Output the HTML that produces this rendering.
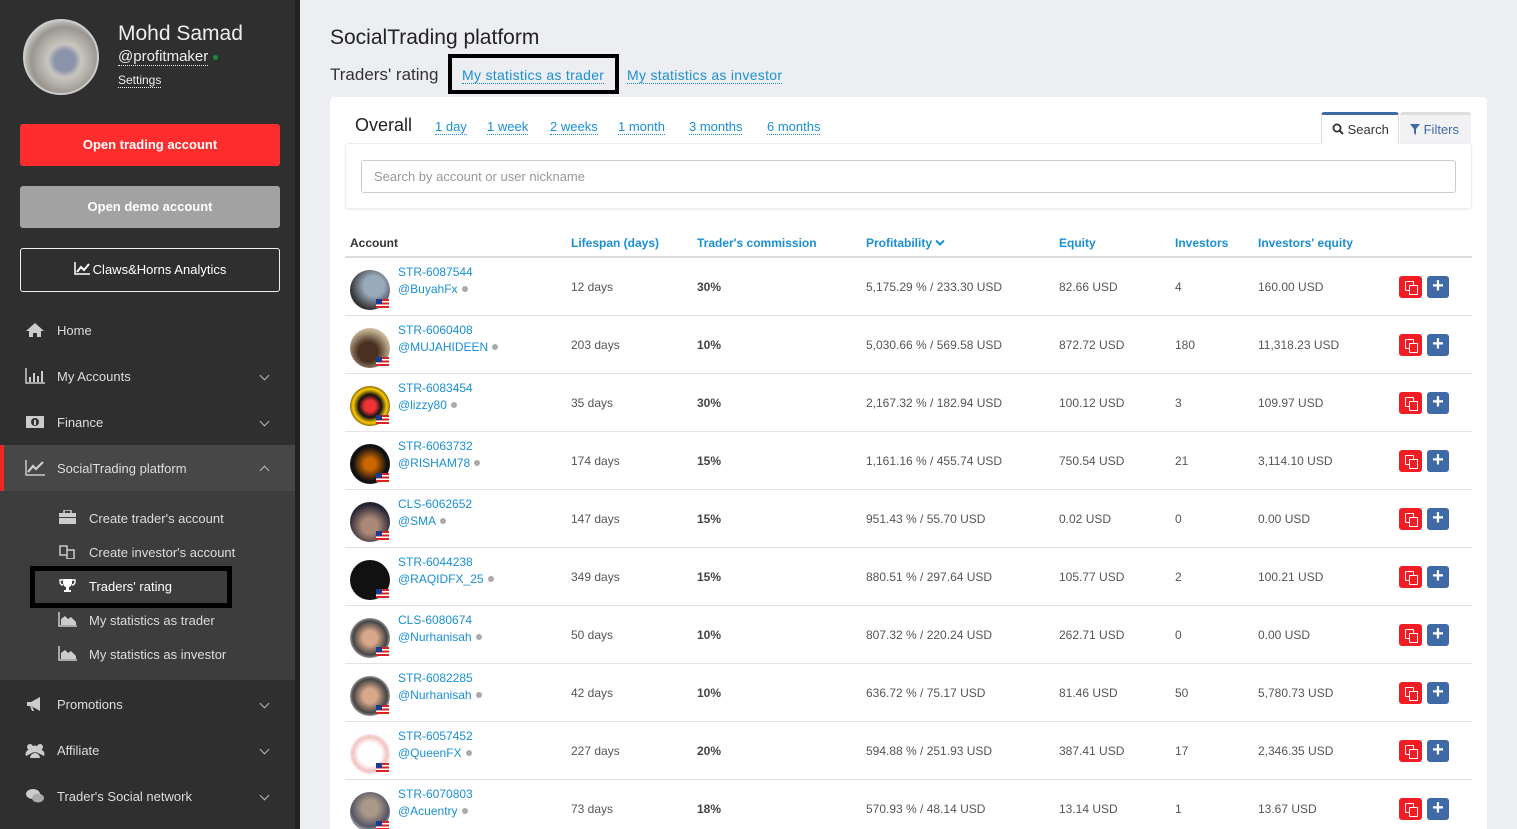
<!DOCTYPE html>
<html><head><meta charset="utf-8">
<style>
*{box-sizing:border-box;margin:0;padding:0}
html,body{width:1517px;height:829px;overflow:hidden}
body{background:#eceef2;font-family:"Liberation Sans",sans-serif;position:relative}
.a{position:absolute;white-space:nowrap}
#sb{position:absolute;left:0;top:0;width:300px;height:829px;background:#2f2f2f}
#sb .strip{position:absolute;left:295px;top:0;width:5px;height:829px;background:#222}
.btn{position:absolute;left:20px;width:260px;border-radius:3px;color:#fff;font-weight:bold;font-size:13px;text-align:center}
.mi{position:absolute;left:57px;color:#ddd;font-size:13px}
.ic{position:absolute;left:25px;width:20px;height:16px}
.chev{position:absolute;left:261px;width:7px;height:7px;border-right:1.5px solid #bbb;border-bottom:1.5px solid #bbb;transform:rotate(45deg)}
.si{position:absolute;left:89px;color:#ddd;font-size:13px}
.sic{position:absolute;left:58px;width:19px;height:15px}
.lnk{color:#1a8fd2;border-bottom:1px dotted #1a8fd2}
.hd{position:absolute;top:236px;font-size:12px;font-weight:bold;color:#1a8fd2}
.row{position:absolute;left:345px;width:1127px;height:58px;border-bottom:1px solid #e4e4e4}
.row .c{position:absolute;top:22px;font-size:12px;color:#555}
.row .cm{font-weight:bold;color:#444!important}
.av{position:absolute;left:5px;top:12px;width:40px;height:40px;border-radius:50%}
.flag{position:absolute;left:31px;top:41px;width:13px;height:9px;background:linear-gradient(#d22 0 20%,#fff 20% 40%,#d22 40% 60%,#fff 60% 80%,#d22 80%)}
.flag:before{content:"";position:absolute;left:0;top:0;width:6px;height:5px;background:#1a3c8f}
.id{position:absolute;left:53px;top:7px;font-size:12px;color:#1a8fd2}
.nk{position:absolute;left:53px;top:24px;font-size:12px;color:#1a8fd2}
.nk i{display:inline-block;width:6px;height:6px;border-radius:50%;background:#aaa;margin-left:4px;vertical-align:1px}
.b1{position:absolute;left:1054px;top:18px;width:23px;height:22px;background:#f01d24;border-radius:3px}
.b1:before{content:"";position:absolute;left:6px;top:5px;width:7px;height:8px;border:1.5px solid #fff;border-radius:1px}
.b1:after{content:"";position:absolute;left:10px;top:9px;width:7px;height:8px;border:1.5px solid #fff;border-radius:1px;background:#f01d24}
.b2{position:absolute;left:1082px;top:18px;width:22px;height:22px;background:#3f6aa6;border-radius:3px;color:#fff;font-size:20px;font-weight:bold;text-align:center;line-height:21px}
</style></head><body>
<div id="sb">
<div class="strip"></div>
<div class="a" style="left:23px;top:19px;width:76px;height:76px;border-radius:50%;background:radial-gradient(circle at 55% 55%,#8a93a9 0 18%,#c9c6bf 30%,#9a968f 60%,#ddd 80%);border:2px solid #ccc"></div>
<div class="a" style="left:118px;top:22px;color:#eee;font-size:21px">Mohd Samad</div>
<div class="a" style="left:118px;top:48px;color:#eee;font-size:15px;border-bottom:1px dotted #eee;line-height:17px">@profitmaker</div>
<div class="a" style="left:213px;top:55px;width:5px;height:5px;border-radius:50%;background:#1a8a3a"></div>
<div class="a" style="left:118px;top:73px;color:#eee;font-size:12px;border-bottom:1px dotted #eee;line-height:14px">Settings</div>
<div class="btn" style="top:124px;height:42px;line-height:42px;background:#fe2d2d">Open trading account</div>
<div class="btn" style="top:186px;height:42px;line-height:42px;background:#a2a2a2">Open demo account</div>
<div class="btn" style="top:248px;height:44px;line-height:42px;border:1.5px solid #eee;font-weight:normal">
<svg width="16" height="13" viewBox="0 0 16 13" style="vertical-align:-1px;margin-right:3px"><path d="M1 0V12H16" stroke="#fff" stroke-width="1.5" fill="none"/><path d="M3 10L7 5L10 8L15 2" stroke="#fff" stroke-width="2" fill="none"/></svg>Claws&amp;Horns Analytics</div>

<svg class="ic" style="top:322px" viewBox="0 0 20 16"><path d="M10 1L1 9H4V15H8V11H12V15H16V9H19Z" fill="#ccc"/></svg>
<div class="mi" style="top:323px">Home</div>
<svg class="ic" style="top:368px" viewBox="0 0 20 16"><path d="M1 0V15H20" stroke="#ccc" stroke-width="1.5" fill="none"/><path d="M4 9h2v5H4zM8 5h2v9H8zM12 8h2v6h-2zM16 3h2v11h-2z" fill="#ccc"/></svg>
<div class="mi" style="top:369px">My Accounts</div><div class="chev" style="top:372px"></div>
<svg class="ic" style="top:414px" viewBox="0 0 20 16"><rect x="1" y="2" width="18" height="12" fill="#ccc"/><circle cx="10" cy="8" r="4" fill="#333"/><rect x="9" y="6" width="2" height="5" fill="#ccc"/></svg>
<div class="mi" style="top:415px">Finance</div><div class="chev" style="top:418px"></div>
<div class="a" style="left:0;top:445px;width:295px;height:46px;background:#474747;border-left:4px solid #f02525"></div>
<svg class="ic" style="top:460px" viewBox="0 0 20 16"><path d="M1 0V15H20" stroke="#ccc" stroke-width="1.5" fill="none"/><path d="M3 12L8 6L11 9L18 2" stroke="#ccc" stroke-width="2.2" fill="none"/></svg>
<div class="mi" style="top:461px">SocialTrading platform</div>
<div class="a" style="left:261px;top:467px;width:7px;height:7px;border-left:1.5px solid #bbb;border-top:1.5px solid #bbb;transform:rotate(45deg)"></div>
<div class="a" style="left:0;top:491px;width:295px;height:189px;background:#3d3d3d"></div>
<svg class="sic" style="top:510px" viewBox="0 0 19 15"><rect x="1" y="3" width="17" height="11" fill="#ccc"/><rect x="6" y="0" width="7" height="4" stroke="#ccc" stroke-width="1.5" fill="none"/><rect x="1" y="7" width="17" height="1" fill="#3d3d3d"/></svg>
<div class="si" style="top:511px">Create trader's account</div>
<svg class="sic" style="top:544px" viewBox="0 0 19 15"><path d="M2 2h7v9H2z M9 6h7v9H9z" stroke="#ccc" stroke-width="1.5" fill="none"/></svg>
<div class="si" style="top:545px">Create investor's account</div>
<div class="a" style="left:30px;top:566px;width:202px;height:42px;border:5px solid #000;background:#3d3d3d"></div>
<svg class="sic" style="top:578px" viewBox="0 0 19 15"><path d="M5 1h9v4a4.5 4.5 0 0 1-9 0z M8 9h3v3h2v2H6v-2h2z" fill="#fff"/><path d="M5 2H2v2a3 3 0 0 0 3 3M14 2h3v2a3 3 0 0 1-3 3" stroke="#fff" fill="none" stroke-width="1.4"/></svg>
<div class="si" style="top:579px;color:#fff">Traders' rating</div>
<svg class="sic" style="top:612px" viewBox="0 0 19 15"><path d="M1 0V14H19" stroke="#ccc" stroke-width="1.5" fill="none"/><path d="M3 13V7L7 4L10 7L13 5L18 10V13Z" fill="#ccc"/></svg>
<div class="si" style="top:613px">My statistics as trader</div>
<svg class="sic" style="top:646px" viewBox="0 0 19 15"><path d="M1 0V14H19" stroke="#ccc" stroke-width="1.5" fill="none"/><path d="M3 13V7L7 4L10 7L13 5L18 10V13Z" fill="#ccc"/></svg>
<div class="si" style="top:647px">My statistics as investor</div>
<svg class="ic" style="top:696px" viewBox="0 0 20 16"><path d="M2 6h4l9-5v14l-9-5H2z M5 10l2 5h2l-2-5" fill="#ccc"/></svg>
<div class="mi" style="top:697px">Promotions</div><div class="chev" style="top:700px"></div>
<svg class="ic" style="top:742px" viewBox="0 0 20 16"><circle cx="5" cy="5" r="3" fill="#ccc"/><circle cx="15" cy="5" r="3" fill="#ccc"/><circle cx="10" cy="7" r="3.5" fill="#ccc"/><path d="M1 14a4 4 0 0 1 8-4 M11 10a4 4 0 0 1 8 4z M5 16a5 5 0 0 1 10 0z" fill="#ccc"/></svg>
<div class="mi" style="top:743px">Affiliate</div><div class="chev" style="top:746px"></div>
<svg class="ic" style="top:788px" viewBox="0 0 20 16"><ellipse cx="8" cy="6" rx="7" ry="5" fill="#ccc"/><ellipse cx="13" cy="10" rx="6" ry="4.5" fill="#aaa"/></svg>
<div class="mi" style="top:789px">Trader's Social network</div><div class="chev" style="top:792px"></div>
</div>

<div class="a" style="left:330px;top:26px;font-size:21px;color:#222">SocialTrading platform</div>
<div class="a" style="left:330px;top:65px;font-size:17px;color:#333">Traders' rating</div>
<div class="a" style="left:448px;top:54px;width:171px;height:40px;border:4px solid #000"></div>
<div class="a" style="left:462px;top:67px;font-size:14px;letter-spacing:0.3px"><span class="lnk">My statistics as trader</span></div>
<div class="a" style="left:627px;top:67px;font-size:14px;letter-spacing:0.3px"><span class="lnk">My statistics as investor</span></div>

<div class="a" style="left:330px;top:97px;width:1157px;height:740px;background:#fff;border-radius:4px"></div>
<div class="a" style="left:355px;top:115px;font-size:18px;color:#222">Overall</div>
<div class="a" style="left:435px;top:119px;font-size:13px"><span class="lnk">1 day</span></div>
<div class="a" style="left:487px;top:119px;font-size:13px"><span class="lnk">1 week</span></div>
<div class="a" style="left:550px;top:119px;font-size:13px"><span class="lnk">2 weeks</span></div>
<div class="a" style="left:618px;top:119px;font-size:13px"><span class="lnk">1 month</span></div>
<div class="a" style="left:689px;top:119px;font-size:13px"><span class="lnk">3 months</span></div>
<div class="a" style="left:767px;top:119px;font-size:13px"><span class="lnk">6 months</span></div>
<div class="a" style="left:345px;top:143px;width:1127px;height:66px;border:1px solid #eee;border-radius:3px;box-shadow:0 1px 2px rgba(0,0,0,.06)"></div>
<div class="a" style="left:1321px;top:112px;width:78px;height:32px;background:#fff;border-top:3px solid #3f6aa6;border-left:1px solid #ddd;border-right:1px solid #ddd;border-radius:3px 3px 0 0;font-size:13px;color:#333;padding:7px 0 0 10px">
<svg width="12" height="12" viewBox="0 0 12 12" style="vertical-align:-1px"><circle cx="5" cy="5" r="3.6" stroke="#333" stroke-width="1.8" fill="none"/><path d="M7.5 7.5L11 11" stroke="#333" stroke-width="2"/></svg> Search</div>
<div class="a" style="left:1400px;top:112px;width:71px;height:31px;background:#f2f2f4;border-top:3px solid #ddd;border-radius:3px 3px 0 0;font-size:13px;color:#3f6aa6;padding:7px 0 0 10px">
<svg width="10" height="11" viewBox="0 0 10 11" style="vertical-align:-1px"><path d="M0 0h10L6 5v6L4 9V5z" fill="#3f6aa6"/></svg> Filters</div>
<div class="a" style="left:361px;top:160px;width:1095px;height:33px;border:1px solid #ccc;border-radius:3px;font-size:13px;color:#999;padding:8px 12px">Search by account or user nickname</div>

<div class="hd" style="left:350px;color:#333">Account</div>
<div class="hd" style="left:571px">Lifespan (days)</div>
<div class="hd" style="left:697px">Trader's commission</div>
<div class="hd" style="left:866px">Profitability <svg width="10" height="8" viewBox="0 0 10 8"><path d="M1 1.5L5 5.5L9 1.5" stroke="#1a8fd2" stroke-width="2" fill="none"/></svg></div>
<div class="hd" style="left:1059px">Equity</div>
<div class="hd" style="left:1175px">Investors</div>
<div class="hd" style="left:1258px">Investors' equity</div>
<div class="a" style="left:345px;top:256px;width:1127px;height:2px;background:#ddd"></div>

<div class="row" style="top:258px"><div class="av" style="background:radial-gradient(circle at 60% 40%,#9ab 0 30%,#333 70%)"></div><div class="flag"></div><div class="id">STR-6087544</div><div class="nk">@BuyahFx<i></i></div><div class="c" style="left:226px">12 days</div><div class="c cm" style="left:352px">30%</div><div class="c" style="left:521px">5,175.29 % / 233.30 USD</div><div class="c" style="left:714px">82.66 USD</div><div class="c" style="left:830px">4</div><div class="c" style="left:913px">160.00 USD</div><div class="b1"></div><div class="b2">+</div></div>
<div class="row" style="top:316px"><div class="av" style="background:radial-gradient(circle at 45% 60%,#4a3020 0 30%,#c9b99a 70%)"></div><div class="flag"></div><div class="id">STR-6060408</div><div class="nk">@MUJAHIDEEN<i></i></div><div class="c" style="left:226px">203 days</div><div class="c cm" style="left:352px">10%</div><div class="c" style="left:521px">5,030.66 % / 569.58 USD</div><div class="c" style="left:714px">872.72 USD</div><div class="c" style="left:830px">180</div><div class="c" style="left:913px">11,318.23 USD</div><div class="b1"></div><div class="b2">+</div></div>
<div class="row" style="top:374px"><div class="av" style="background:radial-gradient(circle,#e33 0 20%,#111 40%,#fc0 60%,#111 80%)"></div><div class="flag"></div><div class="id">STR-6083454</div><div class="nk">@lizzy80<i></i></div><div class="c" style="left:226px">35 days</div><div class="c cm" style="left:352px">30%</div><div class="c" style="left:521px">2,167.32 % / 182.94 USD</div><div class="c" style="left:714px">100.12 USD</div><div class="c" style="left:830px">3</div><div class="c" style="left:913px">109.97 USD</div><div class="b1"></div><div class="b2">+</div></div>
<div class="row" style="top:432px"><div class="av" style="background:radial-gradient(circle,#c60 0 20%,#111 60%)"></div><div class="flag"></div><div class="id">STR-6063732</div><div class="nk">@RISHAM78<i></i></div><div class="c" style="left:226px">174 days</div><div class="c cm" style="left:352px">15%</div><div class="c" style="left:521px">1,161.16 % / 455.74 USD</div><div class="c" style="left:714px">750.54 USD</div><div class="c" style="left:830px">21</div><div class="c" style="left:913px">3,114.10 USD</div><div class="b1"></div><div class="b2">+</div></div>
<div class="row" style="top:490px"><div class="av" style="background:radial-gradient(circle at 50% 60%,#a87 0 25%,#223 70%)"></div><div class="flag"></div><div class="id">CLS-6062652</div><div class="nk">@SMA<i></i></div><div class="c" style="left:226px">147 days</div><div class="c cm" style="left:352px">15%</div><div class="c" style="left:521px">951.43 % / 55.70 USD</div><div class="c" style="left:714px">0.02 USD</div><div class="c" style="left:830px">0</div><div class="c" style="left:913px">0.00 USD</div><div class="b1"></div><div class="b2">+</div></div>
<div class="row" style="top:548px"><div class="av" style="background:#111"></div><div class="flag"></div><div class="id">STR-6044238</div><div class="nk">@RAQIDFX_25<i></i></div><div class="c" style="left:226px">349 days</div><div class="c cm" style="left:352px">15%</div><div class="c" style="left:521px">880.51 % / 297.64 USD</div><div class="c" style="left:714px">105.77 USD</div><div class="c" style="left:830px">2</div><div class="c" style="left:913px">100.21 USD</div><div class="b1"></div><div class="b2">+</div></div>
<div class="row" style="top:606px"><div class="av" style="background:radial-gradient(circle at 50% 50%,#d9a88a 0 25%,#444 60%,#ddd 80%)"></div><div class="flag"></div><div class="id">CLS-6080674</div><div class="nk">@Nurhanisah<i></i></div><div class="c" style="left:226px">50 days</div><div class="c cm" style="left:352px">10%</div><div class="c" style="left:521px">807.32 % / 220.24 USD</div><div class="c" style="left:714px">262.71 USD</div><div class="c" style="left:830px">0</div><div class="c" style="left:913px">0.00 USD</div><div class="b1"></div><div class="b2">+</div></div>
<div class="row" style="top:664px"><div class="av" style="background:radial-gradient(circle at 50% 50%,#d9a88a 0 25%,#444 60%,#ddd 80%)"></div><div class="flag"></div><div class="id">STR-6082285</div><div class="nk">@Nurhanisah<i></i></div><div class="c" style="left:226px">42 days</div><div class="c cm" style="left:352px">10%</div><div class="c" style="left:521px">636.72 % / 75.17 USD</div><div class="c" style="left:714px">81.46 USD</div><div class="c" style="left:830px">50</div><div class="c" style="left:913px">5,780.73 USD</div><div class="b1"></div><div class="b2">+</div></div>
<div class="row" style="top:722px"><div class="av" style="background:radial-gradient(circle,#fff 0 40%,#f3c4c4 60%,#fff 80%)"></div><div class="flag"></div><div class="id">STR-6057452</div><div class="nk">@QueenFX<i></i></div><div class="c" style="left:226px">227 days</div><div class="c cm" style="left:352px">20%</div><div class="c" style="left:521px">594.88 % / 251.93 USD</div><div class="c" style="left:714px">387.41 USD</div><div class="c" style="left:830px">17</div><div class="c" style="left:913px">2,346.35 USD</div><div class="b1"></div><div class="b2">+</div></div>
<div class="row" style="top:780px"><div class="av" style="background:radial-gradient(circle at 50% 40%,#a98 0 25%,#556 60%,#ccc 80%)"></div><div class="flag"></div><div class="id">STR-6070803</div><div class="nk">@Acuentry<i></i></div><div class="c" style="left:226px">73 days</div><div class="c cm" style="left:352px">18%</div><div class="c" style="left:521px">570.93 % / 48.14 USD</div><div class="c" style="left:714px">13.14 USD</div><div class="c" style="left:830px">1</div><div class="c" style="left:913px">13.67 USD</div><div class="b1"></div><div class="b2">+</div></div>
</body></html>
